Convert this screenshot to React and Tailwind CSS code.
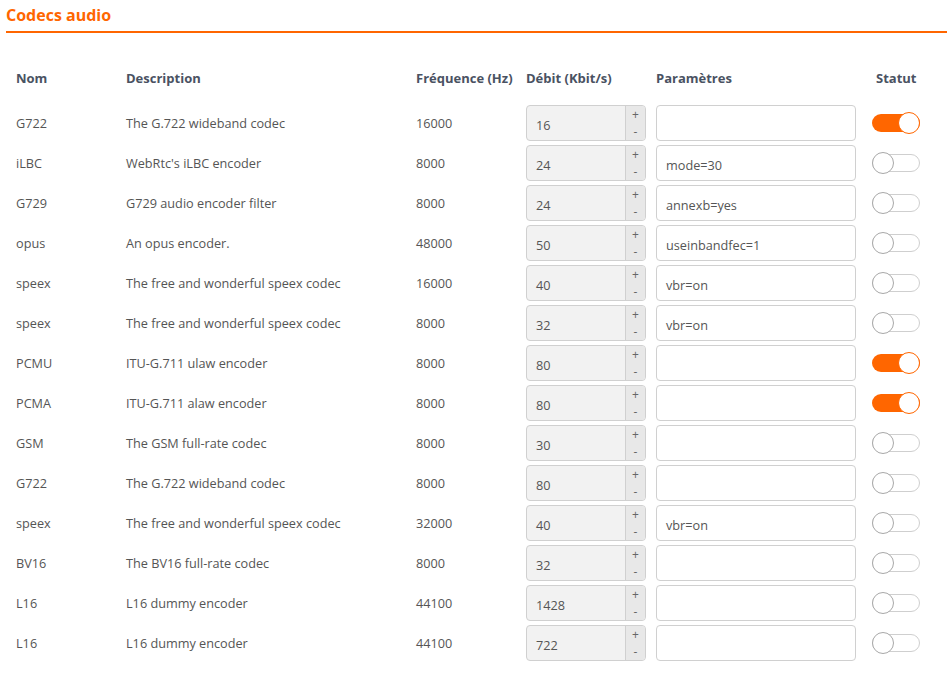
const codecs = [
  { name: 'G722', desc: 'The G.722 wideband codec', freq: '16000', rate: '16', params: '', on: true },
  { name: 'iLBC', desc: "WebRtc's iLBC encoder", freq: '8000', rate: '24', params: 'mode=30', on: false },
  { name: 'G729', desc: 'G729 audio encoder filter', freq: '8000', rate: '24', params: 'annexb=yes', on: false },
  { name: 'opus', desc: 'An opus encoder.', freq: '48000', rate: '50', params: 'useinbandfec=1', on: false },
  { name: 'speex', desc: 'The free and wonderful speex codec', freq: '16000', rate: '40', params: 'vbr=on', on: false },
  { name: 'speex', desc: 'The free and wonderful speex codec', freq: '8000', rate: '32', params: 'vbr=on', on: false },
  { name: 'PCMU', desc: 'ITU-G.711 ulaw encoder', freq: '8000', rate: '80', params: '', on: true },
  { name: 'PCMA', desc: 'ITU-G.711 alaw encoder', freq: '8000', rate: '80', params: '', on: true },
  { name: 'GSM', desc: 'The GSM full-rate codec', freq: '8000', rate: '30', params: '', on: false },
  { name: 'G722', desc: 'The G.722 wideband codec', freq: '8000', rate: '80', params: '', on: false },
  { name: 'speex', desc: 'The free and wonderful speex codec', freq: '32000', rate: '40', params: 'vbr=on', on: false },
  { name: 'BV16', desc: 'The BV16 full-rate codec', freq: '8000', rate: '32', params: '', on: false },
  { name: 'L16', desc: 'L16 dummy encoder', freq: '44100', rate: '1428', params: '', on: false },
  { name: 'L16', desc: 'L16 dummy encoder', freq: '44100', rate: '722', params: '', on: false },
];

const cols = 'grid grid-cols-[110px_290px_110px_130px_216px_1fr] items-center';

function Toggle({ on }) {
  return (
    <div className="relative w-[48px] h-[22px] flex items-center">
      <div className={`w-full h-[18px] rounded-full ${on ? 'bg-[#ff6600]' : 'bg-white border border-[#cfcfcf]'}`} />
      <div
        className={`absolute top-0 w-[22px] h-[22px] rounded-full bg-white border ${
          on ? 'right-0 border-[#ff6600]' : 'left-0 border-[#a8a8a8]'
        }`}
      />
    </div>
  );
}

export default function App() {
  return (
    <div className="w-[947px] h-[675px] bg-white pl-[6px]" style={{ fontFamily: '"Open Sans", sans-serif' }}>
      <div className="h-[33px] border-b-2 border-[#ff6600] pt-[4px]">
        <h1 className="text-[16px] leading-[22px] font-bold text-[#ff6600]">Codecs audio</h1>
      </div>
      <div className="pl-[10px] text-[12.7px] text-[#555555]">
        <div className={`${cols} h-[40px] mt-[26px] text-[13px] font-bold text-[#4a5262]`}>
          <span>Nom</span>
          <span>Description</span>
          <span>Fréquence (Hz)</span>
          <span>Débit (Kbit/s)</span>
          <span>Paramètres</span>
          <span className="pl-[4px]">Statut</span>
        </div>
        <div className="mt-[6px] flex flex-col gap-[4px]">
          {codecs.map((c, i) => (
            <div key={i} className={`${cols} h-[36px]`}>
              <span className="pt-[1px]">{c.name}</span>
              <span className="pt-[1px]">{c.desc}</span>
              <span className="pt-[1px]">{c.freq}</span>
              <div className="w-[120px] h-[36px] flex border border-[#d0d0d0] rounded-[4px] bg-[#f2f2f2] overflow-hidden">
                <div className="flex-1 pl-[9px] pt-[10px] leading-[18px] text-[#555]">{c.rate}</div>
                <div className="w-[20px] border-l border-[#d0d0d0] bg-[#e8e8e8] flex flex-col text-[12px] leading-[17px] text-[#666] text-center">
                  <span className="h-[17px]">+</span>
                  <span className="h-[17px]">-</span>
                </div>
              </div>
              <div className="w-[200px] h-[36px] border border-[#d0d0d0] rounded-[4px] bg-white pl-[9px] pt-[10px] leading-[18px] text-[#555]">
                {c.params}
              </div>
              <Toggle on={c.on} />
            </div>
          ))}
        </div>
      </div>
    </div>
  );
}
